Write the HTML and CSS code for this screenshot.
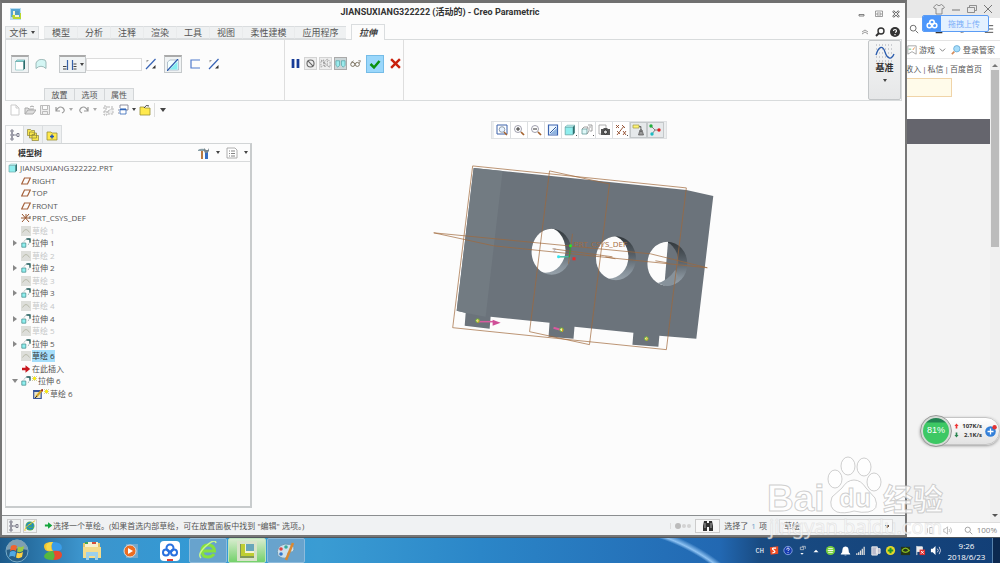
FILE: index.html
```html
<!DOCTYPE html>
<html lang="zh-CN">
<head>
<meta charset="utf-8">
<title>JIANSUXIANG322222 - Creo Parametric</title>
<link rel="stylesheet" href="styles.css">
</head>
<body>
<svg class="sprite" aria-hidden="true">
  <symbol id="plane" viewBox="0 0 10 10"><path d="M3.500 2H9.300L6.500 8H.7Z" fill="none" stroke="#a5623c" stroke-width="1.200"/></symbol>
  <symbol id="sketch" viewBox="0 0 10 10"><path fill="#dddeda" d="M0 0h10v10H0z"/><path d="M1.500 6.500Q5 .5 8.500 6.500" fill="none" stroke="#b9bbab"/></symbol>
  <symbol id="extrude" viewBox="0 0 10 10"><path d="M.8 5h4v4.200h-4z" fill="#8ff0f0" stroke="#4b9292" stroke-width=".8"/><path d="M3 3.500 5 1H9V5L6.500 7" fill="none" stroke="#9aa" stroke-dasharray="1.500 1"/><path d="M5.500 1H9v3.500" fill="none" stroke="#245d5d" stroke-width="1.300"/></symbol>
  <symbol id="part" viewBox="0 0 10 10"><path d="M1 2.500h6.500V9H1z" fill="#8feeee" stroke="#6aa9a9" stroke-width=".7"/><path d="M1 2.500 2.500 1H9L7.500 2.500Z" fill="#c5f5f5" stroke="#6aa9a9" stroke-width=".5"/><path d="M7.500 2.500 9 1v6.500L7.500 9Z" fill="#2f7070"/></symbol>
  <symbol id="arrow" viewBox="0 0 10 10"><path d="M1 3.800h3.500V1.300L9.200 5 4.500 8.700V6.200H1Z"/></symbol>
  <symbol id="star" viewBox="0 0 6 6"><path d="M0 0l6 6M6 0 0 6M3 0v6M0 3h6" stroke="#aaa23c" stroke-width=".6"/><circle cx="3" cy="3" r="1.700" fill="#fff000"/></symbol>
  <symbol id="flip" viewBox="0 0 12 12"><path d="M1 11 10.500 1" stroke="#3763b5" stroke-width="1.200"/><path d="M1.500 2h2.500l-2.500 2.500z" fill="#999"/><path d="M10.500 7v3.500H7z" fill="#333"/></symbol>
  <symbol id="folder" viewBox="0 0 12 12"><path d="M1 3h4l1 1h5v7H1Z" fill="#ffe94d" stroke="#9b9134" stroke-width=".8"/></symbol>
  <symbol id="lens" viewBox="0 0 12 12"><circle cx="5" cy="5" r="3.500" fill="#fff" stroke="#889" stroke-width=".8"/><path d="m8 8 3 3" stroke="#a4622e" stroke-width="1.700"/></symbol>
  <symbol id="undo" viewBox="0 0 12 12"><path d="M2 3v4h4M2 7Q5 1 9 4q3 3-1 5" fill="none" stroke="#999" stroke-width="1.200"/></symbol>
  <symbol id="cloud" viewBox="0 0 16 14"><g fill="none" stroke="currentColor" stroke-width="2"><circle cx="8" cy="4.500" r="3"/><circle cx="4.500" cy="9" r="3"/><circle cx="11.500" cy="9" r="3"/></g></symbol>
  <symbol id="tree" viewBox="0 0 12 12"><g fill="none" stroke="#667" stroke-width=".8"><path d="M2 1h2v2H2zM2 5h2v2H2zM2 9h2v2H2zM8 4.500h2v3H8zM4 6h4M3 3v2M3 7v2"/></g></symbol>
</svg>

<div class="desktop">
  <main class="creo">
    <header class="titlebar">
      <svg class="app-logo" viewBox="0 0 12 12"><path fill="#b9dcf0" d="M0 0h11v12H0z"/><path fill="#56a6d3" d="M1 1h9v8H1z"/><path fill="#f5f5d0" d="M3 3h6v6H3z"/><path fill="#4f9bc2" d="M5 3h4v4H5z"/><path fill="#b8d72e" d="M2 7h3v2h5V5h1v6H3z"/></svg>
      <h1>JIANSUXIANG322222 (活动的) - Creo Parametric</h1>
      <div class="window-buttons">
        <button aria-label="最小化"><svg viewBox="0 0 8 8"><path d="M1 4.500h5v1.500H1z" fill="none" stroke="#666" stroke-width=".8"/></svg></button>
        <button aria-label="最大化"><svg viewBox="0 0 8 8"><path d="M.5 1h7v5.500h-7zM2 3h4v2H2z" fill="none" stroke="#777" stroke-width=".7"/></svg></button>
        <button aria-label="关闭"><svg viewBox="0 0 8 8"><path d="M1 1l6 6M7 1 1 7" stroke="#666" stroke-width="2.400"/><path d="M1.400 1.400l5.200 5.200M6.600 1.400 1.400 6.600" stroke="#fff" stroke-width=".9"/></svg></button>
      </div>
    </header>
    <nav class="tabs">
      <button class="tab file">文件<i class="caret"></i></button>
      <div class="tab-group">
        <button class="tab">模型</button><button class="tab">分析</button><button class="tab">注释</button><button class="tab">渲染</button><button class="tab">工具</button><button class="tab">视图</button><button class="tab wide">柔性建模</button><button class="tab wide">应用程序</button>
      </div>
      <button class="tab active">拉伸</button>
      <div class="help">
        <button aria-label="折叠"><svg viewBox="0 0 10 10"><path d="M2 5l3-2 3 2M2 7l3-2 3 2" fill="none" stroke="#999"/></svg></button>
        <button aria-label="搜索"><svg viewBox="0 0 10 10"><circle cx="6" cy="4" r="3" fill="none" stroke="#333" stroke-width="1.400"/><path d="M4 6 1 9" stroke="#333" stroke-width="2"/></svg></button>
        <button aria-label="帮助"><svg viewBox="0 0 10 10"><circle cx="5" cy="5" r="5" fill="#333"/><path d="M3.500 4Q3.500 2.500 5 2.500T6.500 4Q6.500 5 5 5.500M5 7v1.200" fill="none" stroke="#fff" stroke-width="1.200"/></svg></button>
      </div>
    </nav>
    <section class="ribbon">
      <div class="dashboard">
        <div class="options">
          <button class="tool pressed" aria-label="实体"><svg viewBox="0 0 12 12"><path d="M1.500 2.500h8V11h-8z" fill="#fff" stroke="#9cc" stroke-width=".8"/><path d="M1.500 2.500 3 1h8L9.500 2.500Z" fill="#9ee" stroke="#5a9696" stroke-width=".6"/><path d="M9.500 2.500 11 1v8.500L9.500 11Z" fill="#2c6b6b"/></svg></button>
          <button class="tool" aria-label="曲面"><svg viewBox="0 0 12 12"><path d="M1 10.500V5Q3 0 10 2l1 2v6.500Q6 6 1 10.500Z" fill="#d4f6f4" stroke="#8cabaa" stroke-width=".8"/></svg></button>
          <button class="tool pressed depth" aria-label="深度"><svg viewBox="0 0 16 12"><path d="M5.500 1v10M10.500 1v10" stroke="#3560a8" stroke-width="1.200"/><path d="M1 7.500h3.500M1 10h3.500M11.500 5h3M11.500 7.500h3M11.500 10h3" stroke="#444"/></svg><i class="caret"></i></button>
          <input class="depth-value" type="text" aria-label="深度值">
          <button class="tool" aria-label="反向"><svg><use href="#flip"/></svg></button>
          <button class="tool pressed" aria-label="移除材料"><svg viewBox="0 0 12 12"><path d="M.5 3 3 1h8.500v10h-11z" fill="#f4ffff" stroke="#9ab" stroke-width=".7"/><path d="M10.500 2.500v8H2.500Z" fill="#86eef1"/><path d="M0 12 11 0" stroke="#2959ac" stroke-width="1.200"/></svg></button>
          <button class="tool thicken" aria-label="加厚"><svg viewBox="0 0 12 12"><path d="M11 2H2v8h9" fill="none" stroke="#4f7acc" stroke-width="1.200"/></svg></button>
          <button class="tool" aria-label="反向厚度"><svg><use href="#flip"/></svg></button>
        </div>
        <div class="subtabs"><button>放置</button><button>选项</button><button>属性</button></div>
      </div>
      <div class="commands">
        <button class="mini" aria-label="暂停"><svg viewBox="0 0 10 10"><path d="M1.500 1h2.500v8H1.500zM6 1h2.500v8H6z" fill="#173c97"/></svg></button>
        <button class="mini framed" aria-label="无预览"><svg viewBox="0 0 10 10"><circle cx="5" cy="5" r="3.200" fill="none" stroke="#666"/><path d="M2.700 2.700l4.600 4.600" stroke="#666"/></svg></button>
        <button class="mini framed" aria-label="分离"><svg viewBox="0 0 12 12"><path d="M1 4l3-2v6L1 10zM5 4l3-3v6l-3 3zM9 2l2 2v6L9 9M1 2l9 8" fill="none" stroke="#888" stroke-width=".8" stroke-dasharray="2 1"/></svg></button>
        <button class="mini framed on" aria-label="连接"><svg viewBox="0 0 12 12"><path d="M1 3h4v5L3 10 1 8zM7 3h4v5l-2 2-2-2z" fill="#9cebed" stroke="#469b9e" stroke-width=".7"/></svg></button>
        <button class="mini" aria-label="校验"><svg viewBox="0 0 12 10"><circle cx="3" cy="6" r="2.200" fill="none" stroke="#756a58"/><circle cx="8" cy="6" r="2.200" fill="none" stroke="#756a58"/><path d="M1 4l3-2M10 5l1.500-3L9 2" fill="none" stroke="#756a58" stroke-width=".8"/></svg></button>
        <button class="accept" aria-label="确定"><svg viewBox="0 0 12 12"><path d="M1.500 6 5 9.500 10.500 3" fill="none" stroke="#0a920e" stroke-width="2.500"/></svg></button>
        <button class="mini" aria-label="取消"><svg viewBox="0 0 10 10"><path d="M1 1l8 8M9 1 1 9" stroke="#c9210d" stroke-width="2.200"/></svg></button>
      </div>
      <button class="datum"><svg viewBox="0 0 20 18"><path d="M1 1h18M1 5h18M1 9h18M1 13h18M1 17h18" stroke="#a4a8b0" stroke-dasharray="1 2"/><path d="M1 11C4 1 8 2 10 8s6 9 9 2" fill="none" stroke="#2a5cae" stroke-width="1.300"/></svg><b>基准</b><i class="caret"></i></button>
    </section>
    <div class="quickbar">
      <button aria-label="新建"><svg viewBox="0 0 12 12"><path d="M2 1h5l3 3v7H2ZM7 1v3h3" fill="#fff" stroke="#ccc"/></svg></button>
      <button aria-label="打开"><svg viewBox="0 0 12 12"><path d="M1 10V4h3l1 1h5M1 10l3-4h8l-3 4ZM6 3q2-2 4 0" fill="#ddd" stroke="#aaa"/></svg></button>
      <button aria-label="保存"><svg viewBox="0 0 12 12"><path d="M1.500 1.500h9v9h-9zM3.500 1.500v4h5v-4M3.500 10.500v-3h5v3" fill="#eee" stroke="#bbb"/></svg></button>
      <button aria-label="撤消"><svg><use href="#undo"/></svg></button><i class="caret pale"></i>
      <button aria-label="重做"><svg class="mirror"><use href="#undo"/></svg></button><i class="caret pale"></i>
      <button aria-label="重新生成"><svg viewBox="0 0 12 12"><path d="M2 2h3v3H2zM2 7h3v4H2zM6 3h5M6 7l5-3v6H6Z" fill="#eee" stroke="#b5b5b5" stroke-dasharray="2 1"/></svg></button>
      <button aria-label="窗口"><svg viewBox="0 0 12 12"><path d="M3 4V1h8v5H9M1 9h1M1 6h1" fill="#fff" stroke="#778" stroke-width=".8"/><path d="M3 5h6v5H3z" fill="#fff" stroke="#3065b8" stroke-width=".8"/><path d="M3 5.500h6" stroke="#3065b8" stroke-width="1.500"/></svg></button><i class="caret"></i>
      <button aria-label="关闭窗口"><svg viewBox="0 0 12 12"><use href="#folder"/><path d="M5 4q2-4 5-2" fill="none" stroke="#444"/></svg></button>
      <span class="rule"></span><i class="caret more"></i>
    </div>

    <div class="workspace">
      <aside class="navigator">
        <div class="nav-tabs">
          <button class="selected" aria-label="模型树"><svg><use href="#tree"/></svg></button>
          <button aria-label="文件夹浏览器"><svg viewBox="0 0 12 12"><g fill="#f8e64d" stroke="#8b8338" stroke-width=".7"><path d="M.5.5h3l1 1h3v5h-7zM2.500 3h3l1 1h3v5h-7zM5 5.500h2.500l1 1h3v5H5z"/></g></svg></button>
          <button aria-label="收藏夹"><svg viewBox="0 0 12 12"><use href="#folder"/><path d="M6 5.500v4M4 7.500h4" stroke="#2453b0" stroke-width="1.500"/></svg></button>
        </div>
        <div class="nav-panel">
          <div class="nav-head">
            <b>模型树</b>
            <button aria-label="设置"><svg viewBox="0 0 12 12"><path d="M0 3q2-2 7-1v2H0z" fill="#8ba0a8"/><path d="M3 4h2v8H3z" fill="#b97b42"/><path d="M7 5h3v7H7z" fill="#356dc1"/><path d="M6 1l2 2h2l1-2v3L9 6H7L6 4z" fill="#78858c"/></svg></button><i class="caret"></i>
            <button aria-label="显示"><svg viewBox="0 0 12 12"><path d="M1 1h8l2 2v8H1z" fill="#fff" stroke="#999" stroke-width=".8"/><path d="M3 4h1M5 4h4M3 6.500h1M5 6.500h4M3 9h1M5 9h4" stroke="#666" stroke-width=".8"/></svg></button><i class="caret"></i>
          </div>
          <ul class="tree">
            <li class="root"><svg><use href="#part"/></svg>JIANSUXIANG322222.PRT</li>
            <li><svg><use href="#plane"/></svg>RIGHT</li>
            <li><svg><use href="#plane"/></svg>TOP</li>
            <li><svg><use href="#plane"/></svg>FRONT</li>
            <li><svg viewBox="0 0 10 10"><path d="M1 1l7 8M8 1 1 9M0 5h9M5 5V1" stroke="#98562f"/><path d="M8 3l2 3M10 3 8 6" stroke="#555" stroke-width=".6"/></svg>PRT_CSYS_DEF</li>
            <li class="hidden-item"><svg><use href="#sketch"/></svg>草绘 1</li>
            <li class="closed"><svg><use href="#extrude"/></svg>拉伸 1</li>
            <li class="hidden-item"><svg><use href="#sketch"/></svg>草绘 2</li>
            <li class="closed"><svg><use href="#extrude"/></svg>拉伸 2</li>
            <li class="hidden-item"><svg><use href="#sketch"/></svg>草绘 3</li>
            <li class="closed"><svg><use href="#extrude"/></svg>拉伸 3</li>
            <li class="hidden-item"><svg><use href="#sketch"/></svg>草绘 4</li>
            <li class="closed"><svg><use href="#extrude"/></svg>拉伸 4</li>
            <li class="hidden-item"><svg><use href="#sketch"/></svg>草绘 5</li>
            <li class="closed"><svg><use href="#extrude"/></svg>拉伸 5</li>
            <li><svg><use href="#sketch"/></svg><mark>草绘 6</mark></li>
            <li><svg class="red"><use href="#arrow"/></svg>在此插入</li>
            <li class="opened"><svg><use href="#extrude"/></svg><svg class="new"><use href="#star"/></svg>拉伸 6</li>
            <li class="child"><svg viewBox="0 0 10 10"><path d="M.7 1.500h7.500v8H.7z" fill="#e8e4c8" stroke="#36549b" stroke-width="1.200"/><path d="M.5 2h8" stroke="#36549b" stroke-width="2"/><path d="M3 8 9 1" stroke="#d2a427" stroke-width="2"/><path d="M8.500.5 10 2" stroke="#a32b1d" stroke-width="2"/><path d="M2 9l2-2" stroke="#333"/></svg><svg class="new"><use href="#star"/></svg>草绘 6</li>
          </ul>
        </div>
      </aside>

      <section class="viewport">
        <svg class="model" viewBox="251 118 654 397" preserveAspectRatio="xMinYMin meet" role="img" aria-label="零件模型">
          <defs>
            <linearGradient id="bore" x1="0" y1="0" x2="0" y2="1"><stop offset="0" stop-color="#30363a"/><stop offset=".45" stop-color="#59626a"/><stop offset=".8" stop-color="#87929b"/><stop offset="1" stop-color="#98a3ac"/></linearGradient>
            <clipPath id="c1"><ellipse cx="551" cy="252" rx="20" ry="23"/></clipPath>
            <clipPath id="c2"><ellipse cx="615.500" cy="258.500" rx="20" ry="22"/></clipPath>
            <clipPath id="c3"><ellipse cx="667" cy="264" rx="20" ry="22"/></clipPath>
          </defs>
          <path fill="#6b737b" d="M473 168 686 190l27 6-17 143-37-3-1 11-26-2 1-12-59-6-1 12-25-2 1-14-59-6-1 12-25-3 1-13-9-2Z"/>
          <path fill="#727b82" d="M473 168 502 171 485 317l-21-4-8-2Z"/>
          <g clip-path="url(#c1)"><path fill="url(#bore)" d="M530 228h42v48h-42z"/><ellipse cx="545" cy="250" rx="20" ry="23" fill="#fcfcfc"/></g>
          <g clip-path="url(#c2)"><path fill="url(#bore)" d="M595 236h42v45h-42z"/><ellipse cx="608" cy="257" rx="20" ry="22" fill="#fcfcfc"/></g>
          <g clip-path="url(#c3)"><path fill="url(#bore)" d="M646 241h42v46h-42z"/><ellipse cx="658" cy="262" rx="20" ry="22" fill="#6b737b"/><path d="M640 238h28l-4 48h-24z" fill="#fcfcfc"/><path d="M655 284q12-2 20-14l3 8-8 10z" fill="#87929b"/></g>
          <g fill="none" stroke="#a0683a" stroke-width=".7">
            <path d="M472 166 686 188 666 350 452 328ZM549 171l60 13-20 161-60-13ZM433 233l217 21 57 14-214-22Z"/>
            <path d="M552 249l60 8M605 257l10 2M655 261l12 2M572 234l-4 30"/>
          </g>
          <text x="573" y="247" class="csys">PRT_CSYS_DEF</text>
          <path d="M558 257h11l1-11" fill="none" stroke="#2ba83b"/><path d="M558 257h10" stroke="#4dc5cc"/>
          <circle cx="558" cy="257" r="1.500" fill="#36e3ed"/><circle cx="570" cy="246" r="1.500" fill="#2be62b"/><path fill="#ef2929" d="M572 257.500h3v3h-3z"/>
          <path d="M553 249h2l-2 3h3" fill="none" stroke="#889" stroke-width=".5"/>
          <path d="M478 322h16" stroke="#d95a9f" stroke-width="1.500"/><path d="M492 320l8 3-8 3Z" fill="#cf4f98"/><path d="M553 328l7 2" stroke="#d95a9f" stroke-width="2"/>
          <g fill="#f2f5b0" stroke="#6eb52a"><circle cx="477" cy="321" r="1.800"/><circle cx="561" cy="330" r="1.800"/><circle cx="646" cy="339" r="1.800"/></g>
          <path d="M477.500 320v3M562 329v3M646.500 338v3" stroke="#e09a1f"/>
        </svg>
        <div class="view-tools">
          <button aria-label="重新调整"><svg viewBox="0 0 12 12"><path d="M1 1h10v9H1z" fill="#fff" stroke="#3c62aa"/><circle cx="6" cy="5.500" r="2.800" fill="#e9f3ff" stroke="#789" stroke-width=".8"/><path d="m8 8 3 3" stroke="#a4622e" stroke-width="1.500"/></svg></button>
          <button aria-label="放大"><svg viewBox="0 0 12 12"><use href="#lens"/><path d="M3 5h4M5 3v4" stroke="#333"/></svg></button>
          <button aria-label="缩小"><svg viewBox="0 0 12 12"><use href="#lens"/><path d="M3 5h4" stroke="#333"/></svg></button>
          <button aria-label="重画"><svg viewBox="0 0 12 12"><path d="M1.500 1h9v10h-9z" fill="#eef7ff" stroke="#3963b0" stroke-width="1.200"/><path d="M10 4v6H3Z" fill="#8fb4e0"/><path d="M3 9l6-6" stroke="#345c9e"/></svg></button>
          <button class="menu" aria-label="显示样式"><svg><use href="#part"/></svg></button>
          <button class="menu" aria-label="已命名视图"><svg viewBox="0 0 12 12"><path d="M1 5h5v5H1z" fill="#dff8f8" stroke="#699" stroke-width=".8"/><path d="M1 5l2-2h4L6 5M6 10l2-3V4M7 1h4v6H9M8 3h2" fill="none" stroke="#888" stroke-width=".8"/></svg></button>
          <button aria-label="视图管理器"><svg viewBox="0 0 12 12"><path d="M1 1h7v9H1z" fill="#fff" stroke="#999" stroke-width=".8"/><path d="M3 5h2l1-1h3l1 1h2v6H3Z" fill="#555"/><circle cx="7.500" cy="8" r="2" fill="#ddd" stroke="#222" stroke-width=".8"/></svg></button>
          <button class="menu" aria-label="基准显示"><svg viewBox="0 0 12 12"><path d="M1 1l3 3M4 1 1 4M7 1l3 3M2 11 9 2M2 7l3 3M8 7l3 4M11 7l-3 4" stroke="#8e4828" stroke-width=".9"/></svg></button>
          <button class="pressed" aria-label="注释显示"><svg viewBox="0 0 12 12"><path d="M1 1h6v3H1z" fill="#fff474" stroke="#aaa34c" stroke-width=".8"/><path d="M7 2.500h2v2.500M9 5l1.500 2h-3zM7.500 7.500h3l1 3.500h-5z" fill="#999" stroke="#555" stroke-width=".7"/></svg></button>
          <button class="pressed" aria-label="旋转中心"><svg viewBox="0 0 12 12"><path d="M2 2l4 4-3 4M6 6h5" fill="none" stroke="#666" stroke-width=".8"/><circle cx="2" cy="2" r="1.700" fill="#22af3c"/><circle cx="10" cy="6" r="1.700" fill="#d22"/><circle cx="3" cy="10" r="1.700" fill="#1cbac2"/></svg></button>
        </div>
      </section>
    </div>

    <footer class="statusbar">
      <button class="pressed" aria-label="导航器"><svg><use href="#tree"/></svg></button>
      <button class="pressed" aria-label="浏览器"><svg viewBox="0 0 12 12"><circle cx="6" cy="6" r="4.500" fill="#54b648"/><path d="M3 6h6Q9 3 6 3T3 6t3 3l3-1" fill="none" stroke="#2389c5" stroke-width="1.500"/><path d="M1 11Q0 8 6 4t5-3" fill="none" stroke="#e8c72f"/></svg></button>
      <p><svg class="green"><use href="#arrow"/></svg>选择一个草绘。(如果首选内部草绘，可在放置面板中找到 "编辑" 选项。)</p>
      <span class="lights"><i></i><i></i><i></i></span>
      <button class="find" aria-label="查找"><svg viewBox="0 0 12 12"><path d="M1 11V6l1-5h3v2h2V1h3l1 5v5H7V7H5v4Z" fill="#333"/><path d="M3 3v5M9 3v5" stroke="#aaa"/></svg></button>
      <span class="count">选择了 <em>1</em> 项</span>
      <select aria-label="过滤器"><option>草绘</option></select>
    </footer>
  </main>

  <aside class="browser">
    <div class="b-title">
      <svg viewBox="0 0 12 12"><path d="M3.500 1.500Q6 4 8.500 1.500L11.500 4 10 6 9 5.500V11H3V5.500L2 6 .5 4Z" fill="none" stroke="#777" stroke-width=".8"/></svg>
      <svg viewBox="0 0 12 12"><path d="M2 7h8" stroke="#777"/></svg>
      <svg viewBox="0 0 12 12"><path d="M1.500 4.500h7v5h-7zM3.500 4V2.500h7v5H9" fill="none" stroke="#777" stroke-width=".8"/></svg>
      <svg viewBox="0 0 12 12"><path d="M2 2l8 8M10 2l-8 8" stroke="#777"/></svg>
    </div>
    <div class="b-tools">
      <svg viewBox="0 0 12 12"><circle cx="5" cy="5" r="3.500" fill="none" stroke="#555"/><path d="m8 8 3 3" stroke="#555"/></svg>
      <svg viewBox="0 0 12 12"><path d="M3 2h6v8H3zM5 8h2" fill="none" stroke="#333" stroke-width="2"/></svg>
      <svg viewBox="0 0 12 12"><path d="M2 10q7 0 7-6" fill="none" stroke="#555"/></svg>
      <svg viewBox="0 0 12 12"><path d="M1 2h10M1 6h10M1 10h10" stroke="#333"/></svg>
    </div>
    <div class="b-marks">
      <svg viewBox="0 0 12 12"><path d="M1 1h10v10L6 8l-5 3Z" fill="#fff" stroke="#999"/><path d="M2 5h3" stroke="#46b46b"/><path d="M7 6l2-3" stroke="#e78634"/></svg><a href="#">游戏</a>
      <svg class="chev" viewBox="0 0 8 8"><path d="M1 3l3 3 3-3" fill="none" stroke="#777"/></svg>
      <svg viewBox="0 0 12 12"><circle cx="7" cy="4.500" r="3.800" fill="#a7ddfa" stroke="#65a9d6"/><path d="M4 8 1 11" stroke="#d58a58" stroke-width="2"/></svg><a href="#">登录管家</a>
    </div>
    <div class="page">
      <div class="page-body">
        <nav><a href="#">收入</a><span>|</span><a href="#">私信</a><span>|</span><a href="#">百度首页</a></nav>
        <div class="notice"></div>
        <div class="band"></div>
        <div class="blank"></div>
      </div>
      <div class="scroll"><i class="up"></i><div class="thumb"></div><i class="down"></i></div>
    </div>
    <div class="b-status">
      <svg viewBox="0 0 12 12"><path d="M2 3v6M5 2v8h4V2z" fill="none" stroke="#aaa"/></svg>
      <svg viewBox="0 0 12 12"><path d="M1 4h2l3-3v10L3 8H1zM8 4q2 2 0 4M10 2q3 4 0 8" fill="none" stroke="#aaa"/></svg>
      <svg viewBox="0 0 12 12"><circle cx="5" cy="5" r="3.500" fill="none" stroke="#888"/><path d="m8 8 3 3" stroke="#888"/></svg>
      <span>100%</span>
    </div>
    <button class="upload"><span><svg><use href="#cloud"/></svg></span>拖拽上传</button>
    <div class="speed">
      <strong>81%</strong>
      <dl>
        <dt><svg viewBox="0 0 6 8" class="u" role="img" aria-label="上传"><path d="M3 1 5.500 4H4v3H2V4H.5Z"/></svg></dt><dd>107K/s</dd>
        <dt><svg viewBox="0 0 6 8" class="d" role="img" aria-label="下载"><path d="M3 7 .5 4H2V1h2v3h1.500Z"/></svg></dt><dd>2.1K/s</dd>
      </dl>
      <svg viewBox="0 0 12 12"><circle cx="5.500" cy="6.500" r="5.300" fill="#3380d9"/><path d="M5.500 3.500v6M2.500 6.500h6" stroke="#fff" stroke-width="1.300"/><circle cx="9.600" cy="2.300" r="2.200" fill="#e33434"/></svg>
    </div>
  </aside>
</div>

<footer class="taskbar">
  <button class="start" aria-label="开始"><svg viewBox="0 0 24 24"><circle cx="12" cy="12" r="11" fill="#285f86" stroke="#79adc9"/><path d="M1.500 11a10.500 10.500 0 0 1 21 0Q12 8 1.500 11Z" fill="#7f9fb2"/><path d="M6 7q3-2 6 0l-1 5q-3-2-6 0z" fill="#ef6430"/><path d="M13 7.500q3 1.500 6-.5l-1 5q-3 2-6 .5z" fill="#9acb44"/><path d="M5 13q3-2 6 0l-1 5q-3-2-6 0z" fill="#51a9e3"/><path d="M12 13.500q3 1.500 6-.5l-1 5q-3 2-6 .5z" fill="#ffd042"/></svg></button>
  <button aria-label="桌面助手"><svg viewBox="0 0 20 20"><path d="M10 1v9Q1 12 1 5q0-4 9-4Z" fill="#f4c52d"/><path d="M10 1q9 0 9 6-1 4-9 3-3-5 0-9Z" fill="#3a9de9"/><path d="M10 10q9-1 9 4 0 5-9 5 3-3 0-9Z" fill="#e74c2d"/><path d="M10 10q3 5 0 9-9 0-9-4 1-4 9-5Z" fill="#56b83f"/><path d="M4 9q-3-8 6-8-4 4-1 9Z" fill="#f7d949"/></svg></button>
  <button aria-label="资源管理器"><svg viewBox="0 0 20 20"><path d="M1 2h17v15H1z" fill="#e7c66b"/><path d="M3 1h13v8H3z" fill="#f8f1d0"/><path d="M1 6h18v11H1z" fill="#f5dc8c"/><path d="M4 11h12v8h-3v-4H7v4H4z" fill="#9cd0ec"/><path d="M3 2h3" stroke="#44a852" stroke-width="2"/><path d="M10 2h4" stroke="#d64f3a" stroke-width="2"/></svg></button>
  <button aria-label="媒体播放器"><svg viewBox="0 0 20 20"><path d="M5 3h12v14H5z" fill="#70a9cf"/><circle cx="9" cy="10" r="6" fill="#ed6d21" stroke="#ddd"/><path d="M7 7l5 3-5 3Z" fill="#fff"/></svg></button>
  <button aria-label="百度网盘"><svg viewBox="0 0 20 20"><rect width="20" height="20" rx="4" fill="#fff"/><g fill="none" stroke="#2770df" stroke-width="2"><circle cx="10" cy="7" r="3.500"/><circle cx="6" cy="11.500" r="3"/><circle cx="14" cy="11.500" r="3"/></g><path d="M7 19h6" stroke="#e23d35" stroke-width="2"/></svg></button>
  <button class="running" aria-label="浏览器"><svg viewBox="0 0 20 20"><path d="M4 10h12.500Q16 4 10 4T4 10t6 6q4 0 6-3" fill="none" stroke="#86e03e" stroke-width="3"/><path d="M3 17Q-1 13 8 5t10-3" fill="none" stroke="#c8f889" stroke-width="1.500"/></svg></button>
  <button class="running current" aria-label="Creo"><svg viewBox="0 0 20 20"><path d="M0 0h20v20H0z" fill="#d8e3c9"/><path d="M3 3h14v14H3z" fill="#7f9859"/><path d="M5 3h12v11H5z" fill="#f4f3d0"/><path d="M9 3h8v7H9z" fill="#68a6ba"/><path d="M4 3h4v9h9v3H4z" fill="#bfce32"/></svg></button>
  <button class="running" aria-label="画图"><svg viewBox="0 0 20 20"><path d="M2 15Q-1 5 9 3q10 0 9 6-1 3-4 2-3 0-2 3 0 4-6 3Z" fill="#cce0ec" stroke="#6998b5"/><circle cx="5" cy="8" r="1.800" fill="#d44"/><circle cx="10" cy="6" r="1.800" fill="#3a9"/><circle cx="5" cy="13" r="1.800" fill="#37c"/><path d="M10 19 17 2" stroke="#d98932" stroke-width="2.500"/></svg></button>
  <div class="tray">
    <span class="lang">CH</span>
    <svg viewBox="0 0 12 12"><path d="M1 2 11 1v9L2 11Z" fill="#ef4c24"/><path d="M8.500 3H5Q3 4 6 6t-2 3" fill="none" stroke="#fff" stroke-width="1.500"/></svg>
    <svg viewBox="0 0 12 12"><circle cx="6" cy="6" r="5" fill="#173baf" stroke="#91aee6"/><path d="M4.500 5q0-2 1.500-2t1.500 1.500L6 6.500M6 8v1" fill="none" stroke="#fff"/></svg>
    <svg viewBox="0 0 12 12"><path d="M4 2h4v3H4zM6 1h4v3" fill="none" stroke="#ddd" stroke-width=".8"/><path d="M4 9h4L6 11Z" fill="#fff"/></svg>
    <svg viewBox="0 0 12 12"><path d="M3 8 6 5l3 3Z" fill="#fff"/></svg>
    <svg class="after" viewBox="0 0 12 12"><circle cx="6" cy="6" r="5" fill="#77cf3c"/><path d="M3.500 4h5M3.500 8h5M3 6h6" stroke="#fff"/></svg>
    <svg viewBox="0 0 12 12"><path d="M1 10q2-1 2-5 0-3 3-3t3 3q0 4 2 5ZM5 11h2" fill="#fff" stroke="#fff" stroke-width=".6"/></svg>
    <svg viewBox="0 0 12 12"><path d="M2 11V9M4 11V8M6 11V6M8 11V4M10 11V2" stroke="#ddd" stroke-width="1.400"/></svg>
    <svg viewBox="0 0 12 12"><path d="M2 2h6v9H2zM7 4h4v5H7z" fill="#bbc" stroke="#eee"/></svg>
    <svg viewBox="0 0 12 12"><circle cx="6" cy="6" r="5" fill="#e6d929"/><path d="M6 3v6M3 6h6" stroke="#22952a" stroke-width="2.200"/></svg>
    <svg viewBox="0 0 12 12"><path d="M1 2h10v9H1z" fill="#253518"/><path d="M2 6q4-5 8 0-4 4-8 0" fill="none" stroke="#85b922" stroke-width="1.400"/></svg>
    <svg viewBox="0 0 12 12"><path d="M2 1v10M2 2h6v5H2" fill="#eee" stroke="#eee"/><path d="M5 5h6v6H5z" fill="#dd3030"/><path d="M6.500 6.500l3 3m0-3-3 3" stroke="#fff"/></svg>
    <svg viewBox="0 0 12 12"><path d="M1 4h2l3-3v10L3 8H1z" fill="#fff"/><path d="M8 4q2 2 0 4M10 2q3 4 0 8" fill="none" stroke="#dde"/></svg>
  </div>
  <time><span>9:26</span><span>2018/6/23</span></time>
  <button class="show-desktop" aria-label="显示桌面"></button>
</footer>

<svg class="watermark" viewBox="0 0 190 110" aria-hidden="true">
  <g class="mark">
    <text x="7" y="58" class="latin">Bai</text>
    <ellipse cx="75" cy="26" rx="7" ry="9"/><ellipse cx="88" cy="13" rx="7" ry="9"/><ellipse cx="104" cy="14" rx="7" ry="9"/><ellipse cx="114" cy="29" rx="7" ry="9"/>
    <path d="M94 27q7 0 12 8l9 10q5 12-7 14-6 1-14-1-10 3-17 1-9-4-5-15l10-9q5-8 12-8Z"/>
    <text x="79" y="54" class="du">du</text>
    <text x="123" y="57" class="cjk">经验</text>
    <text x="9" y="81" class="url">jingyan.baidu.com</text>
  </g>
</svg>
</body>
</html>
```
FILE: styles.css
```css
* { box-sizing: border-box; }
body {
  margin: 0;
  height: 100vh;
  display: flex;
  flex-direction: column;
  overflow: hidden;
  position: relative;
  font: 8px/12px "Open Sans", "Noto Sans CJK SC", sans-serif;
  color: #555;
}
button, input, select { font: inherit; color: inherit; margin: 0; }
button { border: 0; padding: 0; background: none; display: flex; align-items: center; justify-content: center; white-space: nowrap; }
svg { width: 12px; height: 12px; flex: none; display: block; }
.sprite { position: absolute; width: 0; height: 0; }
a { color: inherit; text-decoration: none; }
ul, h1, p, dl, dd { margin: 0; padding: 0; list-style: none; }
.caret { width: 0; height: 0; flex: none; border: 2px solid transparent; border-top: 3px solid #444; border-bottom: 0; }
.caret.pale { border-top-color: #aaa; }

.desktop { flex: 1; min-height: 0; display: flex; }
.creo {
  flex: 1;
  min-width: 0;
  display: flex;
  flex-direction: column;
  background: #fcfcfc;
  border: 2px solid #777;
  border-top: 3px solid #707070;
}

.titlebar { height: 21px; padding: 0 5px 0 8px; display: flex; align-items: center; flex: none; }
.titlebar h1 { flex: 1; text-align: center; font: bold 9px/12px Roboto, "Noto Sans CJK SC", sans-serif; color: #333; padding: 0 0 3px; }
.window-buttons { display: flex; gap: 9px; }
.window-buttons svg { width: 8px; height: 8px; }

.tabs { height: 16px; margin: 0 3px; display: flex; align-items: flex-end; flex: none; position: relative; z-index: 1; font-size: 9px; }
.tab { height: 13px; width: 33px; border: 1px solid #dadddf; background: #eff1f2; }
.tab.wide { width: 52px; }
.tab.file { width: 34px; gap: 3px; margin-right: 5px; margin-bottom: 1px; }
.tab-group { display: flex; margin-bottom: 1px; }
.tab-group .tab { border-left-color: #e9ebec; border-right: 0; }
.tab.active { height: 16px; width: 34px; margin-left: 5px; background: #fcfcfc; border-bottom: 0; font-weight: bold; font-style: italic; color: #444; }
.help { margin-left: auto; align-self: center; display: flex; gap: 5px; padding-right: 2px; }
.help svg { width: 10px; height: 10px; }

.ribbon { height: 62px; margin: -1px 3px 0; border: 1px solid #d8dbdc; display: flex; flex: none; }
.dashboard { width: 279px; display: flex; flex-direction: column; justify-content: space-between; border-right: 1px solid #dedede; }
.options { display: flex; align-items: center; padding: 15px 0 0 5px; }
.tool { width: 18px; height: 18px; margin-right: 4px; border: 1px solid transparent; }
.tool:nth-child(2) { margin: 0 9px 0 -1px; }
.tool.pressed { border: 1px solid #c5c9cb; border-top: 2px solid #aaa; background: #f0f3f4; }
.tool.depth { width: 27px; margin: 0; gap: 2px; }
.tool.depth svg { width: 16px; }
.tool.thicken { margin-right: 1px; }
.depth-value { width: 56px; height: 13px; border: 1px solid #dcdcdc; background: #fff; padding: 0 2px; }
.subtabs { display: flex; padding-left: 38px; }
.subtabs button { height: 12px; width: 30px; border: 1px solid #d3d6d8; border-bottom: 0; border-right: 0; background: #eef0f1; }
.subtabs button:last-child { border-right: 1px solid #d3d6d8; }
.commands { width: 119px; display: flex; align-items: flex-start; padding: 15px 0 0 4px; border-right: 1px solid #dedede; gap: 2px; }
.commands .mini { width: 13px; height: 13px; margin-top: 2px; }
.commands .mini svg { width: 11px; height: 11px; }
.mini.framed { border: 1px solid #d3d3d3; background: #eee; }
.mini.framed.on { background: #ccd6d8; border-color: #aaa; }
.accept { width: 18px; height: 18px; background: #9ad7fb; border: 1px solid #75bce7; margin: 0 3px 0 2px; }
.datum { margin-left: auto; width: 33px; flex-direction: column; justify-content: flex-start; padding-top: 3px; border: 1px solid #c3c6c8; border-radius: 2px; background: linear-gradient(#f4f5f5, #e6e7e8); font-size: 9px; color: #333; }
.datum svg { width: 20px; height: 18px; }
.datum .caret { margin-top: 5px; }

.quickbar { height: 17px; display: flex; flex: none; align-items: center; gap: 3px; padding-left: 7px; }
.quickbar .pale { margin-right: 2px; }
.quickbar .rule { height: 14px; border-left: 1px solid #ddd; }
.quickbar .more { margin-left: 2px; border-top-width: 4px; border-left-width: 3px; border-right-width: 3px; }
.mirror { transform: scaleX(-1); }

.workspace { flex: 1; min-height: 0; display: flex; }
.navigator { width: 247px; margin: 7px 0 7px 3px; display: flex; flex-direction: column; flex: none; }
.nav-tabs { display: flex; }
.nav-tabs button { width: 19px; height: 18px; border: 1px solid #dadddf; border-bottom: 0; border-left: 0; background: #eef0f1; }
.nav-tabs .selected { background: #fcfcfc; border-left: 1px solid #dadddf; }
.nav-panel { flex: 1; border: 1px solid #d2d5d6; border-right: 2px solid #c9cccd; border-bottom: 2px solid #c9cccd; }
.nav-head { height: 18px; border-bottom: 1px solid #d8dadb; display: flex; align-items: center; padding: 0 2px 0 12px; gap: 6px; color: #333; }
.nav-head b { margin-right: auto; }
.tree { height: 238px; display: flex; flex-direction: column; justify-content: space-between; }
.tree li { display: flex; align-items: center; gap: 1px; padding-left: 15px; white-space: pre; }
.tree svg { width: 10px; height: 10px; }
.tree .root { padding-left: 2px; gap: 2px; }
.tree .child { padding-left: 27px; }
.tree .hidden-item { color: #c4c6c7; }
.tree .new { width: 5px; height: 5px; align-self: flex-start; margin-top: 1px; }
.tree mark { background: #a5defb; color: #333; }
.tree .closed, .tree .opened { padding-left: 7px; color: #555; }
.tree .closed::before { content: ""; border: 3px solid transparent; border-left: 4px solid #888; border-right: 0; margin-right: 3px; }
.tree .opened::before { content: ""; border: 3px solid transparent; border-top: 4px solid #888; border-bottom: 0; margin: 0 2px 0 -1px; }
.red { fill: #c8171e; }
.green { fill: #12a43b; }

.viewport { flex: 1; min-width: 0; position: relative; }
.model { width: 100%; height: 100%; }
.csys { font: 8px "Open Sans", sans-serif; fill: #a36b3e; }
.view-tools { position: absolute; top: 3px; left: 50%; transform: translateX(-50%); display: flex; padding: 0 2px; border: 1px solid #dfe1e3; background: #eceeef; }
.view-tools button { width: 17px; height: 16px; background: #fff; border-right: 1px solid #dcdfe1; }
.view-tools .pressed { background: #e6e9eb; border: 1px solid #c4c8ca; }
.view-tools .menu { background: linear-gradient(#555, #555) 14px 13px / 1px 1px no-repeat, #fff; }

.statusbar { height: 20px; flex: none; display: flex; align-items: center; padding: 0 12px 0 5px; border-top: 1px solid #8b8e90; background: #f0f2f3; }
.statusbar .pressed { width: 14px; height: 14px; border: 1px solid #ccc; margin-right: 2px; }
.statusbar p { display: flex; align-items: center; padding-left: 5px; margin-right: auto; white-space: nowrap; }
.green { width: 9px; height: 9px; }
.lights { display: flex; align-items: center; gap: 1px; padding: 0 4px; border-left: 1px solid #ddd; }
.lights i { width: 4px; height: 4px; border-radius: 50%; background: #d3d3d3; }
.lights i:first-child { width: 6px; height: 6px; background: #bbb; }
.find { width: 25px; height: 14px; border: 1px solid #ccc; background: #f8f8f8; }
.count { padding: 0 12px 0 4px; }
.count em { font-style: normal; color: #6fa1c9; padding: 0 1px; }
.statusbar select { width: 114px; height: 14px; appearance: none; border: 1px solid #ddd; border-radius: 0; padding: 0 4px; background: linear-gradient(45deg, transparent 50%, #555 50%) 104px 5px / 3px 3px no-repeat, linear-gradient(-45deg, transparent 50%, #555 50%) 107px 5px / 3px 3px no-repeat, #f7f8f8; }

.browser { width: 93px; flex: none; display: flex; flex-direction: column; position: relative; background: #fff; }
.b-title { height: 18px; display: flex; align-items: center; gap: 4px; justify-content: flex-end; padding-right: 6px; background: #e8e8e8; }
.b-title svg:first-child { margin-right: 1px; }
.b-title svg { width: 12px; }
.b-tools { height: 23px; display: flex; align-items: center; justify-content: space-between; padding: 0 6px 0 2px; border-bottom: 1px solid #e4e4e4; }
.b-tools svg { width: 10px; height: 10px; }
.b-marks { height: 18px; display: flex; align-items: center; gap: 2px; padding-right: 5px; border-bottom: 1px solid #e8e8e8; white-space: nowrap; }
.b-marks svg { width: 10px; height: 10px; }
.b-marks .chev { width: 7px; height: 7px; margin-right: auto; margin-left: 2px; }
.page { flex: 1; min-height: 0; display: flex; }
.page-body { flex: 1; min-width: 0; display: flex; flex-direction: column; }
.page-body nav { height: 19px; display: flex; justify-content: flex-end; align-items: center; gap: 1px; padding-right: 8px; overflow: hidden; white-space: nowrap; }
.notice { width: 45px; height: 19px; border: 1px solid #f0d4a8; border-left: 0; background: #fffbea; }
.band { height: 25px; margin-top: 22px; background: #65656d; }
.blank { flex: 1; background: #f3f3f3; }
.scroll { width: 10px; background: #f0f0f0; display: flex; flex-direction: column; align-items: center; padding: 5px 1px; gap: 3px; }
.scroll .up { border: 3px solid transparent; border-bottom-color: #777; border-top: 0; }
.scroll .down { border: 3px solid transparent; border-top-color: #555; border-bottom: 0; margin-top: auto; }
.thumb { width: 8px; height: 177px; background: #bcbcbc; }
.b-status { height: 15px; display: flex; align-items: center; justify-content: flex-end; gap: 8px; padding-right: 3px; color: #888; border-top: 1px solid #ddd; }
.b-status svg { width: 9px; height: 9px; }
.b-status svg:nth-child(3) { margin: 0 -4px 0 4px; }
.upload { position: absolute; left: 15px; top: 15px; width: 67px; height: 17px; border: 1px solid #5b9cf5; border-radius: 2px; background: #e4f1ff; color: #7aaef8; justify-content: flex-start; overflow: hidden; gap: 7px; }
.upload span { width: 18px; height: 17px; flex: none; background: #4d97fb; color: #fff; display: grid; place-items: center; }
.speed { position: absolute; left: 13px; right: 0; bottom: 92px; height: 28px; border-radius: 14px; border: 1px solid #c5c5c5; background: linear-gradient(#fff, #e2e2e2); box-shadow: 0 1px 3px #999; display: flex; align-items: center; gap: 3px; color: #333; }
.speed strong { width: 30px; height: 30px; flex: none; border-radius: 50%; border: 2px solid #d4dbd5; outline: 1px solid #999; background: linear-gradient(#238352 0 4px, #3dc864 5px); color: #fff; font: 9px/24px "Liberation Sans", sans-serif; text-align: center; }
.speed dl { flex: 1; display: grid; grid-template-columns: 6px 1fr; font: bold 6px/9px "Open Sans", sans-serif; }
.speed dd { text-align: right; }
.speed dt svg { width: 5px; height: 8px; }
.u { fill: #e33; }
.d { fill: #298450; }
.speed > svg { width: 12px; height: 12px; margin-right: 2px; }

.taskbar { height: 26px; flex: none; display: flex; align-items: stretch; border-top: 1px solid #50565c; background: radial-gradient(circle at 0 180px, transparent 189px, #8fc3f3 192px, transparent 197px) 600px 0 / 140px 100% no-repeat, linear-gradient(90deg, #1c5a8a, #3c94cc 8%, #329bd6 22%, #3a9cd3 32%, #2b86c8 48%, #2268b2 72%, #194b82 76%, #123f77); }
.taskbar > button { width: 39px; }
.taskbar > button svg { width: 20px; height: 20px; }
.taskbar .start { width: 33px; }
.taskbar .start svg { width: 24px; height: 24px; }
.taskbar .running { width: 38px; margin-right: 1px; border: 1px solid #8dbbdc; border-radius: 2px; background: #68a3cd; }
.taskbar .current { background: linear-gradient(#d7ecce, #74d16b); border-color: #bde3bd; }
.tray { margin-left: auto; display: flex; align-items: center; gap: 4px; }
.tray svg { width: 11px; height: 11px; }
.tray svg:nth-of-type(-n+4) { width: 10px; }
.tray .lang { color: #fff; font: 7px/10px "Liberation Mono", monospace; padding-right: 1px; }
.taskbar time { width: 51px; color: #fff; display: flex; flex-direction: column; align-items: center; justify-content: center; line-height: 11px; }
.taskbar .show-desktop { width: 8px; border-left: 1px solid #5782ac; background: #0c2950; }

.watermark { position: absolute; right: 50px; bottom: 0; width: 190px; height: 110px; pointer-events: none; }
.mark { fill: #fff; fill-opacity: .75; stroke: #bbb; stroke-opacity: .7; stroke-width: 1; }
.latin { font: bold 37px "Liberation Sans", sans-serif; }
.du { font: bold 25px "Open Sans", sans-serif; }
.cjk { font: bold 30px "Noto Sans CJK SC", sans-serif; }
.url { font: 20px "Noto Sans", sans-serif; stroke-opacity: .3; stroke-width: 1; }
```
